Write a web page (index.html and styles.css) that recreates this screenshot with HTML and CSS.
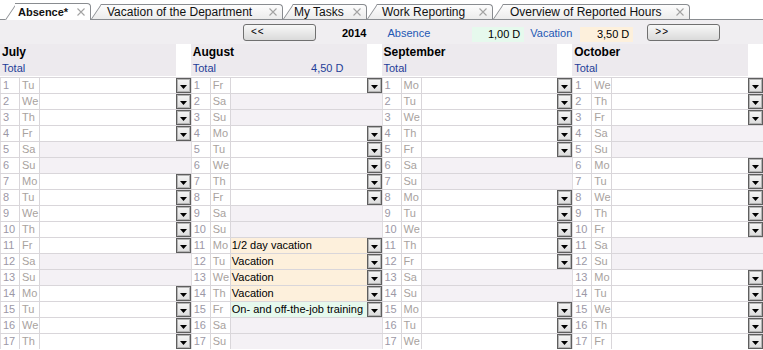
FILE: index.html
```html
<!DOCTYPE html>
<html lang="en">
<head>
    <meta charset="UTF-8">
    <title>Absence</title>
    <link rel="stylesheet" href="styles.css">
</head>
<body>

<!-- tab strip -->
<div class="tabs">
    <div class="tab active"><span class="tab-label">Absence*</span><span class="tab-close"><svg width="8" height="8" viewBox="0 0 8 8"><path d="M0.5 0.5L7.5 7.5M7.5 0.5L0.5 7.5"/></svg></span></div>
    <div class="tab"><span class="tab-label">Vacation of the Department</span><span class="tab-close"><svg width="8" height="8" viewBox="0 0 8 8"><path d="M0.5 0.5L7.5 7.5M7.5 0.5L0.5 7.5"/></svg></span></div>
    <div class="tab"><span class="tab-label">My Tasks</span><span class="tab-close"><svg width="8" height="8" viewBox="0 0 8 8"><path d="M0.5 0.5L7.5 7.5M7.5 0.5L0.5 7.5"/></svg></span></div>
    <div class="tab"><span class="tab-label">Work Reporting</span><span class="tab-close"><svg width="8" height="8" viewBox="0 0 8 8"><path d="M0.5 0.5L7.5 7.5M7.5 0.5L0.5 7.5"/></svg></span></div>
    <div class="tab"><span class="tab-label">Overview of Reported Hours</span><span class="tab-close"><svg width="8" height="8" viewBox="0 0 8 8"><path d="M0.5 0.5L7.5 7.5M7.5 0.5L0.5 7.5"/></svg></span></div>
</div>

<!-- year switcher and sums -->
<div class="toolbar">
    <button class="nav-btn">&lt;&lt;</button>
    <span class="year">2014</span>
    <span class="sum-label first">Absence</span>
    <span class="sum-box absence">1,00 D</span>
    <span class="sum-label">Vacation</span>
    <span class="sum-box vacation">3,50 D</span>
    <button class="nav-btn next">&gt;&gt;</button>
</div>

<!-- month columns, filled by the script -->
<div class="months" id="months"></div>

<script>
    const YEAR = 2014;
    const ROWS = 17;
    const DAY_NAMES = ['Su', 'Mo', 'Tu', 'We', 'Th', 'Fr', 'Sa'];

    const MONTHS = [
        { name: 'July', index: 6, total: '' },
        { name: 'August', index: 7, total: '4,50 D' },
        { name: 'September', index: 8, total: '' },
        { name: 'October', index: 9, total: '' }
    ];

    // booked days: "month-day" -> [text, type]
    const ENTRIES = {
        '7-11': ['1/2 day vacation', 'vacation'],
        '7-12': ['Vacation', 'vacation'],
        '7-13': ['Vacation', 'vacation'],
        '7-14': ['Vacation', 'vacation'],
        '7-15': ['On- and off-the-job training', 'training']
    };

    const ARROW = '<span class="pick-btn"><svg width="7" height="4" viewBox="0 0 7 4"><path d="M0 0H7L3.5 4Z"/></svg></span>';

    function buildMonth(m) {
        let html = `
            <div class="month-head">
                <div class="month-name">${m.name}</div>
                <div class="month-total"><span>Total</span><span>${m.total}</span></div>
            </div>`;

        for (let day = 1; day <= ROWS; day++) {
            const weekday = new Date(YEAR, m.index, day).getDay();
            const weekend = weekday === 0 || weekday === 6;
            const entry = ENTRIES[m.index + '-' + day];

            html += `
            <div class="day${weekend ? ' weekend' : ''}">
                <div class="day-num">${day}</div>
                <div class="day-name">${DAY_NAMES[weekday]}</div>
                <div class="day-text ${entry ? entry[1] : ''}">${entry ? entry[0] : ''}</div>
                <div class="day-pick">${weekend ? '' : ARROW}</div>
            </div>`;
        }
        return html;
    }

    const container = document.getElementById('months');
    MONTHS.forEach(m => {
        const col = document.createElement('div');
        col.className = 'month';
        col.innerHTML = buildMonth(m);
        container.appendChild(col);
    });
</script>

</body>
</html>
```

FILE: styles.css
```css
/* base */
body {
    margin: 0;
    font-family: "Liberation Sans", Arial, sans-serif;
    font-size: 11px;
    color: #000;
    background: #fff;
}

/* tab strip */
.tabs {
    display: flex;
    align-items: flex-end;
    height: 20px;
    box-sizing: border-box;
    padding-left: 5px;
    border-bottom: 1px solid #898c90;
}
.tab {
    position: relative;
    z-index: 0;
    display: flex;
    align-items: center;
    height: 15px;
    padding: 0 6px 0 15px;
    box-sizing: border-box;
    font-size: 12px;
    color: #111;
}
.tab::before,
.tab::after {
    content: "";
    position: absolute;
    z-index: -1;
    top: 0;
    bottom: 0;
    background: linear-gradient(#fdfdfd, #ececec);
    border-top: 1px solid #898c90;
}
/* slanted left edge */
.tab::before {
    left: 0;
    width: 14px;
    border-left: 1px solid #898c90;
    transform-origin: bottom left;
    transform: skewX(-34deg);
}
.tab::after {
    left: 10px;
    right: 0;
    border-right: 1px solid #898c90;
    border-top-right-radius: 4px;
}
.tab.active {
    height: 17px;
    margin-bottom: -1px;
    font-size: 11px;
    font-weight: bold;
}
.tab.active::before,
.tab.active::after {
    background: #fff;
}
.tab:nth-child(1) { width: 86px; padding-left: 13px; }
.tab:nth-child(2) { width: 192px; padding-left: 16px; }
.tab:nth-child(3) { width: 84px; padding-left: 11px; }
.tab:nth-child(4) { width: 126px; }
.tab:nth-child(5) { width: 197px; padding-left: 17px; }
.tab-label {
    white-space: nowrap;
}
.tab-close {
    display: flex;
    margin-left: auto;
}
.tab-close path {
    stroke: #a3a3a3;
    stroke-width: 1.1;
}

/* toolbar */
.toolbar {
    display: flex;
    align-items: flex-start;
    height: 24px;
    box-sizing: border-box;
    padding: 4px 0 0 243px;
    background: #f0eef1;
}
.nav-btn {
    width: 73px;
    height: 17px;
    margin: 0;
    box-sizing: border-box;
    padding: 0 0 3px 7px;
    border: 1px solid #707070;
    border-radius: 3px;
    background: linear-gradient(#f8f8f8, #dadada);
    font-family: "Liberation Sans", Arial, sans-serif;
    font-size: 10px;
    letter-spacing: 1px;
    text-align: left;
    color: #000;
}
.nav-btn.next {
    margin-left: 14px;
}
.year {
    margin: 1px 0 0 26px;
    line-height: 17px;
    font-weight: bold;
}
.sum-label {
    margin: 1px 0 0 6px;
    line-height: 17px;
    color: #2358b4;
}
.sum-label.first {
    margin-left: 21px;
}
.sum-box {
    width: 52px;
    height: 15px;
    margin: 3px 0 0 8px;
    box-sizing: border-box;
    padding-right: 4px;
    line-height: 15px;
    text-align: right;
}
.sum-box.absence {
    margin-left: 42px;
    background: #e6f9ed;
}
.sum-box.vacation {
    width: 53px;
    background: #fdf0dc;
}

/* month columns */
.months {
    display: grid;
    grid-template-columns: repeat(4, 1fr);
}
.month-head {
    height: 32px;
    margin: 0 15px 1px 0;
    background: #edeaee;
}
.month-name {
    height: 17px;
    padding-left: 2px;
    font-size: 12px;
    font-weight: bold;
    line-height: 17px;
}
.month-total {
    display: flex;
    justify-content: space-between;
    padding: 0 23px 0 2px;
    line-height: 15px;
    color: #1f3d98;
}

/* day rows */
.day {
    display: grid;
    grid-template-columns: 20px 20px 1fr 15px;
    height: 16px;
    box-sizing: border-box;
    border-top: 1px solid #d9d6da;
    line-height: 15px;
}
.day-num {
    padding-left: 2px;
    border-left: 1px solid #e0dde1;
    border-right: 1px solid #d9d6da;
    color: #9c98a6;
}
.day-name {
    padding-left: 2px;
    border-right: 1px solid #d9d6da;
    color: #a8a29e;
}
.day-text {
    padding-left: 1px;
    white-space: nowrap;
    overflow: hidden;
}
.day-text.vacation {
    background: #fdf0dc;
}
.day-text.training {
    background: #e6f9ed;
}
.weekend .day-text,
.weekend .day-pick {
    background: #f4f1f5;
}
.pick-btn {
    display: flex;
    align-items: flex-end;
    justify-content: center;
    width: 15px;
    height: 15px;
    box-sizing: border-box;
    padding-bottom: 3px;
    border: 1px solid #5e5e5e;
    box-shadow: inset 0 0 0 1px #b4b4b4;
    background: linear-gradient(#f6f6f6, #dcdcdc);
}
.pick-btn path {
    fill: #000;
}
```
